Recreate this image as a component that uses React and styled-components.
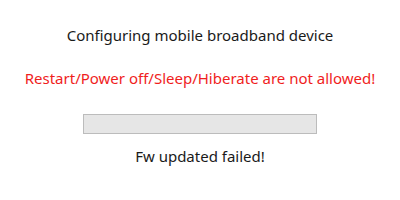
import React from "react";
import styled, { createGlobalStyle } from "styled-components";

const GlobalStyle = createGlobalStyle`
  html, body {
    margin: 0;
    padding: 0;
    background: #fff;
  }
`;

function App() {
  return (
    <>
      <GlobalStyle />
      <Dialog>
        <Title>Configuring mobile broadband device</Title>
        <Warning>Restart/Power off/Sleep/Hiberate are not allowed!</Warning>
        <ProgressBar>
          <ProgressFill style={{ width: "0%" }} />
        </ProgressBar>
        <Status>Fw updated failed!</Status>
      </Dialog>
    </>
  );
}

const Dialog = styled.div`
  width: 400px;
  height: 200px;
  box-sizing: border-box;
  display: flex;
  flex-direction: column;
  align-items: center;
  padding-top: 25px;
  font-family: "Noto Sans", "Open Sans", sans-serif;
  font-size: 15px;
  background: #fff;
`;

const Title = styled.p`
  margin: 0;
  color: #1a1a1a;
  line-height: 20px;
`;

const Warning = styled.p`
  margin: 23px 0 0;
  color: #f01d1d;
  line-height: 20px;
`;

const ProgressBar = styled.div`
  margin-top: 26px;
  width: 234px;
  height: 20px;
  box-sizing: border-box;
  border: 1px solid #bcbcbc;
  background: #e6e6e6;
`;

const ProgressFill = styled.div`
  height: 100%;
  background: #06b025;
`;

const Status = styled.p`
  margin: 12px 0 0;
  color: #1a1a1a;
  line-height: 20px;
`;

export default App;
